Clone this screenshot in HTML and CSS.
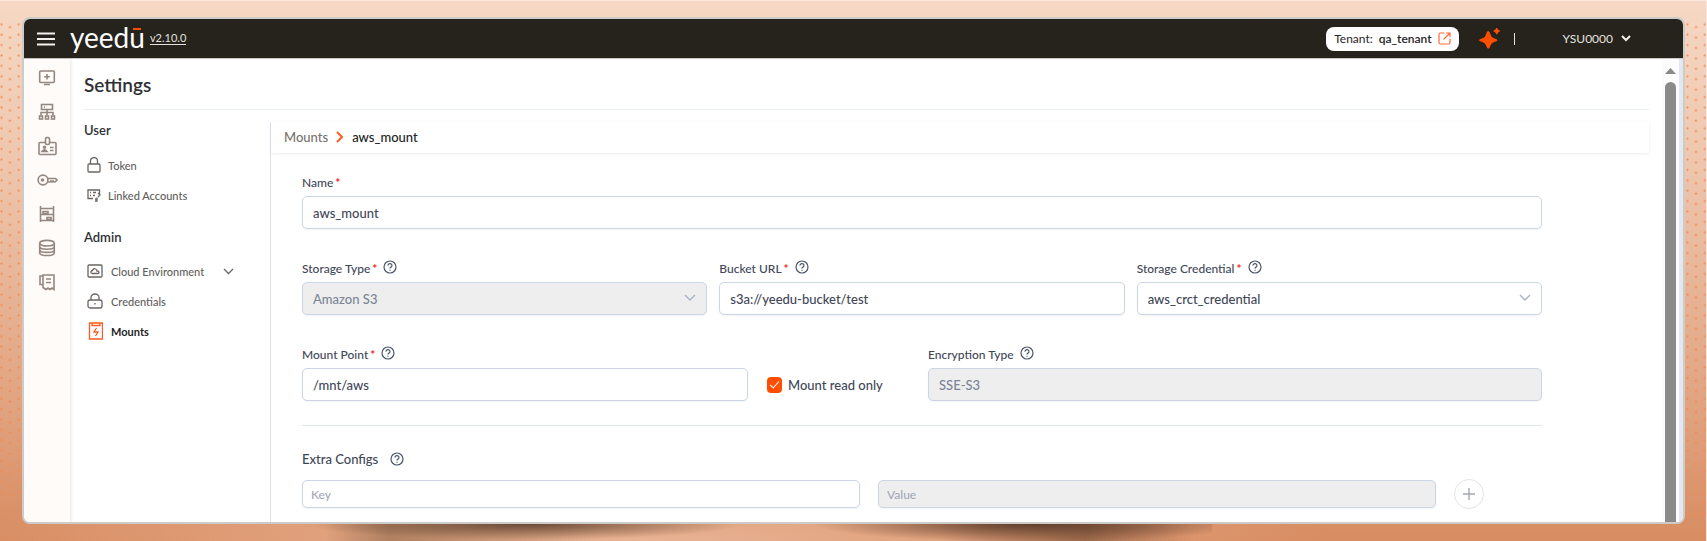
FILE: index.html
```html
<!DOCTYPE html>
<html lang="en">
<head>
  <meta charset="UTF-8" />
  <title>Settings - Mounts</title>
  <link rel="stylesheet" href="styles.css">
</head>
<body>
  <svg class="backdrop" aria-hidden="true">
    <defs>
      <pattern id="dots" width="17.2" height="10.4" patternUnits="userSpaceOnUse" x="0" y="1">
        <circle cx="1.500" cy="1.500" r="1.100" />
        <circle cx="10" cy="4.400" r="1.100" />
      </pattern>
    </defs>
    <rect x="0" y="20" width="22" height="88%" fill="url(#dots)" />
    <svg x="100%" y="0" width="24" height="100%" overflow="visible">
      <g transform="translate(-20 0)">
        <rect x="0" y="20" width="20" height="92%" fill="url(#dots)" />
      </g>
    </svg>
  </svg>

  <div class="window">
    <header class="topbar">
      <button class="icon-btn" aria-label="Menu">
        <svg width="18" height="14" viewBox="0 0 18 14" stroke="#f3f1ee" stroke-width="2.2"><path d="M0 1.5h18M0 7h18M0 12.5h18" /></svg>
      </button>
      <div class="logo">yeed<span class="logo-u">u</span></div>
      <a class="version" href="#">v2.10.0</a>

      <button class="tenant">
        <span>Tenant:</span>
        <strong>qa_tenant</strong>
        <svg width="13" height="13" viewBox="0 0 13 13" fill="none" stroke="#ff6a33" stroke-width="1.2" stroke-linecap="round" stroke-linejoin="round"><path d="M6 1H2.5Q1 1 1 2.5v8Q1 12 2.500 12h8q1.500 0 1.500-1.500V7M8.500 1H12v3.500M12 1L6 7" /></svg>
      </button>
      <button class="icon-btn" aria-label="Assistant">
        <svg width="21" height="21" viewBox="0 0 21 21" fill="#ff4e00"><path d="M9 3Q10.800 3 11.300 6Q12.200 9.400 15 10.300Q18.500 11.200 18.500 12.200Q18.500 13.200 15 14.100Q12.200 15 11.300 18Q10.500 20.700 9.300 20.700Q8.200 20.700 7.300 18Q6.400 15 3.500 14.100Q0 13.200 0 12.200Q0 11.200 3.500 10.300Q6.400 9.400 7.200 6Q7.800 3 9 3Z" /><path d="M17.700 0Q18.300 2.400 20.700 3Q18.300 3.600 17.700 6.200Q17.100 3.600 14.700 3Q17.100 2.400 17.700 0Z" stroke="#ff4e00" /></svg>
      </button>
      <span class="divider"></span>
      <button class="account">
        YSU0000
        <svg width="10" height="7" viewBox="0 0 10 7" fill="none" stroke="#f3f1ee" stroke-width="2"><path d="M1 1l4 4 4-4" /></svg>
      </button>
    </header>

    <div class="main">
      <nav class="rail" aria-label="Workspace">
        <a href="#" aria-label="Notebooks"><svg viewBox="0 0 18 18"><rect x="1.700" y="2" width="14.600" height="11.500" rx="1" /><path d="M9 5v5.500M6.200 7.700h5.600M6 15.500h6" /></svg></a>
        <a href="#" aria-label="Clusters"><svg viewBox="0 0 18 18"><rect x="3.500" y="1.500" width="11" height="5" /><path d="M6 4h1M9 6.500v6M3 12.500V9.500h12v3" /><rect x="1.500" y="13" width="3" height="3" /><rect x="7.500" y="13" width="3" height="3" /><rect x="13.500" y="13" width="3" height="3" /></svg></a>
        <a href="#" aria-label="Identity"><svg class="wide" viewBox="0 0 20 20"><rect x="1.500" y="6.500" width="17" height="12" rx="1" /><rect x="8" y="1.500" width="4" height="7" rx="1.500" fill="#fffbf8" /><circle cx="7" cy="11.200" r="1" /><path d="M4.500 15.500q2.500-3.200 5 0zM12.500 11.500h3.500M12.500 14.500h3.500" /></svg></a>
        <a href="#" aria-label="Keys"><svg class="wide" viewBox="0 0 21 18"><circle cx="6" cy="9" r="4.900" /><circle cx="5.500" cy="9" r="1" /><path d="M10.500 7.500h8l1.500 1.500-2 2h-1l-1-1-1 1-1-1-1 1h-2.500" /></svg></a>
        <a href="#" aria-label="Storage"><svg viewBox="0 0 18 18"><path d="M2.500 1v16M15.500 1v16M2.500 3.500h13M2.500 9.500h13M2.500 15.500h13" /><path d="M5 6.500h5v2H5zM9 12.500h4v2H9z" /></svg></a>
        <a href="#" aria-label="Databases"><svg viewBox="0 0 18 18"><ellipse cx="9" cy="4.200" rx="7.300" ry="2.800" /><path d="M1.700 4.200v9.500q0 2.800 7.300 2.800t7.300-2.800V4.200M1.700 7.500q0 2.700 7.300 2.700t7.300-2.700M1.700 10.700q0 2.700 7.300 2.700t7.300-2.700" /></svg></a>
        <a href="#" aria-label="Billing"><svg viewBox="0 0 18 18"><path d="M5 2h11v14.500l-2-1.500-2 1.500-2-1.500-2 1.500-3-2zM5 3H2v8.500h3M8 6h5M8 9.500h5" /></svg></a>
      </nav>

      <main class="page">
        <h1>Settings</h1>
        <div class="columns">
          <nav class="side" aria-label="Settings">
            <h2>User</h2>
            <a class="narrow" href="#">
              <svg width="14" height="16" viewBox="0 0 14 16"><rect x="1" y="7" width="12" height="8" rx="1" /><path d="M3.500 7V4a3.500 3.500 0 0 1 7 0v3" /></svg>
              Token
            </a>
            <a class="narrow" href="#">
              <svg width="14" height="14" viewBox="0 0 14 14"><path d="M6 10.500H1V2h11.500v4M3 4.500h1M3 7.500h1M6 4.500h3M6 7.500h2M11 5l2 2-2 2M8 13h2V9.500M8 11h2" /></svg>
              Linked Accounts
            </a>
            <h2 class="admin">Admin</h2>
            <a href="#">
              <svg width="16" height="14" viewBox="0 0 16 14"><rect x="1" y="1" width="14" height="12" rx="1" /><path d="M5 9.500Q3.500 9 4 7.500 4.500 6.500 5.500 6.500 6.500 4 8.500 5 10 5.500 10 7 12 7 12 8.500 12 9.500 11 9.500Z" /></svg>
              Cloud Environment
              <svg class="chevron" width="11" height="7" viewBox="0 0 11 7"><path d="M1 1l4.500 4.500L10 1" /></svg>
            </a>
            <a href="#">
              <svg width="16" height="16" viewBox="0 0 16 16"><rect x="1" y="7" width="14" height="8" rx="2" /><path d="M4 7V4.500a4 3.500 0 0 1 8 0V7M8 10v1.500" /></svg>
              Credentials
            </a>
            <a class="active" href="#">
              <svg width="16" height="18" viewBox="0 0 16 18"><path d="M2.500 1h13v16h-13zM5 1v2.500h8V1M9.500 6l-2.500 4h4l-2.500 4" /></svg>
              Mounts
            </a>
          </nav>

          <section class="content">
            <div class="breadcrumb">
              <a href="#">Mounts</a>
              <svg width="8" height="12" viewBox="0 0 8 12" fill="none" stroke="#ff5a1f" stroke-width="2"><path d="M1 1l5 5-5 5" /></svg>
              <span>aws_mount</span>
            </div>

            <form>
              <div class="field">
                <div class="label"><label for="name">Name<b>*</b></label></div>
                <input type="text" id="name" value="aws_mount" />
              </div>

              <div class="row thirds">
                <div class="field">
                  <div class="label"><label for="storageType">Storage Type<b>*</b></label><svg class="help"><use href="#help" /></svg></div>
                  <div class="select">
                    <select id="storageType" disabled><option>Amazon S3</option></select>
                    <svg width="12" height="8" viewBox="0 0 12 8"><path d="M1 1l5 5 5-5" /></svg>
                  </div>
                </div>
                <div class="field">
                  <div class="label"><label for="bucket">Bucket URL<b>*</b></label><svg class="help"><use href="#help" /></svg></div>
                  <input type="text" id="bucket" value="s3a://yeedu-bucket/test" />
                </div>
                <div class="field">
                  <div class="label"><label for="credential">Storage Credential<b>*</b></label><svg class="help"><use href="#help" /></svg></div>
                  <div class="select">
                    <select id="credential"><option>aws_crct_credential</option></select>
                    <svg width="12" height="8" viewBox="0 0 12 8"><path d="M1 1l5 5 5-5" /></svg>
                  </div>
                </div>
              </div>

              <div class="row mount">
                <div class="field">
                  <div class="label"><label for="mountPoint">Mount Point<b>*</b></label><svg class="help"><use href="#help" /></svg></div>
                  <input type="text" id="mountPoint" value="/mnt/aws" />
                </div>
                <div class="check">
                  <input type="checkbox" id="readOnly" checked />
                  <label for="readOnly">Mount read only</label>
                </div>
                <div class="field">
                  <div class="label"><label for="encryption">Encryption Type</label><svg class="help"><use href="#help" /></svg></div>
                  <input type="text" id="encryption" value="SSE-S3" disabled />
                </div>
              </div>

              <div class="extra">
                <h3>Extra Configs <svg class="help"><use href="#help" /></svg></h3>
                <div class="pair">
                  <input type="text" placeholder="Key" aria-label="Key" />
                  <input type="text" placeholder="Value" aria-label="Value" disabled />
                  <button type="button" class="add" aria-label="Add config">
                    <svg width="12" height="12" viewBox="0 0 12 12" stroke="#a3a6ad" stroke-width="1.400"><path d="M6 0v12M0 6h12" /></svg>
                  </button>
                </div>
              </div>
            </form>
          </section>
        </div>
      </main>

      <div class="scrollbar">
        <svg width="11" height="6" viewBox="0 0 11 6" fill="#8a8a8a"><path d="M0 6L5.500 0 11 6z" /></svg>
        <div class="thumb"></div>
      </div>
    </div>
  </div>
  <div class="shadow"></div>

  <svg width="0" height="0" class="symbols">
    <symbol id="help" viewBox="0 0 14 14">
      <circle cx="7" cy="7" r="6" fill="none" stroke="#4b5568" stroke-width="1.200" />
      <path d="M5 5.600a2 1.900 0 1 1 3 1.500q-1 .6-1 1.400M7 9.700v1.100" fill="none" stroke="#4b5568" stroke-width="1.200" />
    </symbol>
  </svg>
</body>
</html>
```
FILE: styles.css
```css
* {
  box-sizing: border-box;
}

body {
  margin: 0;
  height: 100vh;
  padding: 17px 22px;
  overflow: hidden;
  font-family: Lato, 'Open Sans', sans-serif;
  font-size: 13px;
  color: #3f4757;
  background:
    radial-gradient(ellipse 40% 70px at 38% 100%, #e8b394 0%, transparent 100%),
    linear-gradient(#f6d8c4, #efc6ad 30%, #e1a380 75%, #d88c61);
}

button, input, select {
  font: inherit;
  color: inherit;
}

button {
  border: none;
  background: none;
  padding: 0;
  cursor: pointer;
}

a {
  color: inherit;
  text-decoration: none;
}

/* dotted edges behind the window */
.backdrop {
  position: absolute;
  inset: 0;
  width: 100%;
  height: 100%;
  border-top: 1px solid #fae6da;
  border-right: 1px solid #fae6da;
}

.backdrop circle {
  fill: #f08a50;
}

.symbols {
  position: absolute;
}

.shadow {
  position: absolute;
  left: 18%;
  right: 29%;
  bottom: 0;
  height: 17px;
  background:
    radial-gradient(ellipse 24% 16px at 24% 0, #6b4b36 0%, transparent 100%),
    radial-gradient(ellipse 24% 18px at 80% 0, #613f2c 0%, transparent 100%),
    linear-gradient(90deg, transparent 2%, #8e684c99 9%, transparent 32%, transparent 70%, #774c3399 86%, transparent 98%);
}

.window {
  position: relative;
  height: 100%;
  display: flex;
  flex-direction: column;
  border: 2px solid #cccbc9;
  border-radius: 8px;
  background: #fff;
  overflow: hidden;
}

/* top bar */
.topbar {
  display: flex;
  align-items: center;
  flex: none;
  height: 40px;
  padding: 0 52px 0 13px;
  background: #26231d;
  color: #e4e2df;
  border-bottom: 1px solid #c9c8c6;
}

.icon-btn {
  display: flex;
}

.logo {
  margin: 0 5px 4px 15px;
  font-size: 28px;
  line-height: 32px;
  color: #fff;
}

.logo-u {
  position: relative;
}

.logo-u::before {
  content: "";
  position: absolute;
  left: 4px;
  right: 4px;
  top: 8px;
  height: 2px;
  background: #ff4e00;
}

.version {
  font-size: 11px;
  line-height: 12px;
  border-bottom: 1px solid #e4e2df;
}

.tenant {
  display: flex;
  align-items: center;
  gap: 6px;
  height: 24px;
  margin: 0 20px 0 auto;
  padding: 0 8px;
  border-radius: 8px;
  background: #fff;
  color: #26231d;
  font-size: 12px;
}

.tenant strong {
  font-weight: 600;
}

.divider {
  width: 1px;
  height: 12px;
  margin: 0 48px 0 14px;
  background: #e4e2df;
}

.account {
  display: flex;
  align-items: center;
  gap: 8px;
  font-size: 12px;
}

/* layout */
.main {
  display: flex;
  flex: 1;
  min-height: 0;
}

.rail {
  display: flex;
  flex-direction: column;
  align-items: center;
  gap: 16px;
  flex: none;
  width: 46px;
  padding-top: 10px;
  background: #fffbf8;
  box-shadow: 1px 0 3px #0000001a;
}

.rail a {
  display: flex;
  align-items: center;
  height: 18px;
}

.rail svg {
  width: 18px;
  height: 18px;
  fill: none;
  stroke: #94877f;
  stroke-width: 1.6;
}

.rail svg.wide {
  width: 21px;
  height: 20px;
}

.page {
  flex: 1;
  min-width: 0;
  padding: 0 13px 0 14px;
}

h1 {
  margin: 0;
  height: 51px;
  padding-top: 14px;
  border-bottom: 1px solid #e9eef3;
  font-size: 19px;
  line-height: 24px;
  font-weight: 600;
  color: #2f3136;
}

.columns {
  display: flex;
  padding-top: 12px;
}

.side {
  flex: none;
  width: 186px;
  font-size: 11px;
  font-weight: 500;
  color: #625e5b;
}

.side h2 {
  margin: 0 0 12px;
  font-size: 13px;
  line-height: 16px;
  font-weight: 600;
  color: #2f3136;
}

.side h2.admin {
  margin: 19px 0 11px;
}

.side a {
  display: flex;
  align-items: center;
  gap: 8px;
  height: 30px;
  padding-left: 3px;
}

.side a.narrow {
  gap: 7px;
}

.side svg {
  fill: none;
  stroke: #6b6561;
  stroke-width: 1.3;
}

.side .chevron {
  margin-left: 11px;
}

.side .active {
  font-weight: bold;
  color: #1f1f1f;
}

.side .active svg {
  stroke: #ff5a1f;
}

.content {
  flex: 1;
  min-width: 0;
  height: 500px;
  border-left: 1px solid #dfe2ea;
}

.breadcrumb {
  display: flex;
  align-items: center;
  gap: 8px;
  height: 31px;
  padding: 0 0 2px 13px;
  box-shadow: 0 1px 3px #00000014;
  font-weight: 500;
  color: #77726e;
}

.breadcrumb span {
  color: #222;
}

/* form */
form {
  padding: 15px 107px 0 31px;
}

.field {
  min-width: 0;
}

.label {
  display: flex;
  align-items: center;
  gap: 6px;
  height: 28px;
  font-size: 12px;
  font-weight: 500;
}

.label b {
  margin-left: 2px;
  color: #ee2b24;
}

.help {
  width: 14px;
  height: 14px;
}

.label .help {
  margin-bottom: 2px;
}

input[type="text"], select {
  display: block;
  width: 100%;
  height: 33px;
  padding: 0 10px;
  border: 1px solid #cbd5e4;
  border-radius: 5px;
  outline: none;
  background: #fff;
  box-shadow: 0 1px 2px #0000000d;
  font-weight: 500;
  appearance: none;
}

input[type="text"]:disabled, select:disabled {
  background: #eee;
  color: #7b8596;
  opacity: 1;
}

.select {
  position: relative;
}

.select svg {
  position: absolute;
  right: 11px;
  top: 12px;
  fill: none;
  stroke: #a8b1c6;
  stroke-width: 1.4;
  pointer-events: none;
}

.row {
  display: grid;
  margin-top: 25px;
}

.thirds {
  grid-template-columns: repeat(3, 1fr);
  gap: 12px;
}

.mount {
  grid-template-columns: 446fr 180fr 614fr;
  align-items: end;
}

.check {
  display: flex;
  align-items: center;
  gap: 6px;
  height: 33px;
  padding-left: 19px;
  font-weight: 500;
}

.check input {
  display: flex;
  align-items: center;
  justify-content: center;
  width: 15px;
  height: 16px;
  margin: 0;
  border-radius: 4px;
  background: #ff4e00;
  appearance: none;
}

.check input:checked::before {
  content: "";
  width: 4px;
  height: 8px;
  margin-bottom: 2px;
  border: solid #fff;
  border-width: 0 1px 1px 0;
  transform: rotate(42deg);
}

.extra {
  margin-top: 24px;
  padding-top: 24px;
  border-top: 1px solid #e0e6ef;
}

.extra h3 {
  display: flex;
  align-items: center;
  gap: 12px;
  margin: 0 0 11px;
  font-size: 13px;
  line-height: 18px;
  font-weight: 500;
}

.pair {
  display: flex;
  align-items: center;
  gap: 18px;
  padding-right: 58px;
}

.pair input[type="text"] {
  flex: 1;
  min-width: 0;
  height: 28px;
  padding: 0 8px;
  font-size: 12px;
}

.pair ::placeholder {
  color: #a3a9b5;
}

.add {
  display: flex;
  align-items: center;
  justify-content: center;
  flex: none;
  width: 30px;
  height: 30px;
  border: 1px solid #e4e4e8;
  border-radius: 50%;
}

/* page scrollbar */
.scrollbar {
  display: flex;
  flex-direction: column;
  align-items: center;
  gap: 8px;
  flex: none;
  width: 21px;
  padding-top: 9px;
  border-right: 4px solid #e3e8f0;
  background: #fcfcfc;
}

.thumb {
  flex: 1;
  width: 11px;
  border-radius: 6px 6px 0 0;
  background: #8a8a8a;
}
```
